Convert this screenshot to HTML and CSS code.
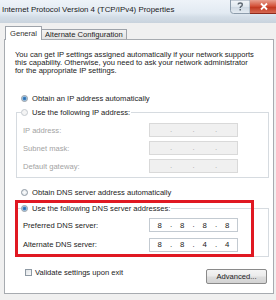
FILE: index.html
```html
<!DOCTYPE html>
<html>
<head>
<meta charset="utf-8">
<link rel="stylesheet" href="styles.css">
</head>
<body>
<div class="window">
  <div class="titlebar">
    <span class="title">Internet Protocol Version 4 (TCP/IPv4) Properties</span>
    <svg class="controls" width="46" height="14" viewBox="0 0 46 14">
      <defs>
        <linearGradient id="hg" x1="0" y1="0" x2="0" y2="1">
          <stop offset="0" stop-color="#f4f7fa"/>
          <stop offset="0.5" stop-color="#dfe7ee"/>
          <stop offset="0.55" stop-color="#cfd9e3"/>
          <stop offset="1" stop-color="#e6edf3"/>
        </linearGradient>
        <linearGradient id="cg" x1="0" y1="0" x2="0" y2="1">
          <stop offset="0" stop-color="#e8a090"/>
          <stop offset="0.45" stop-color="#d4533b"/>
          <stop offset="0.55" stop-color="#c23a22"/>
          <stop offset="1" stop-color="#d86e58"/>
        </linearGradient>
      </defs>
      <path d="M0.5 0 V10.5 Q0.5 13.5 3.5 13.5 H20 V0 Z" fill="url(#hg)" stroke="#8d9cab"/>
      <rect x="20" y="0" width="26" height="13.5" fill="url(#cg)"/>
      <path d="M20 13.5 H46" stroke="#8e2a1c"/>
      <path d="M8.2 4.6 Q8.2 3 10.2 3 Q12.3 3 12.3 4.7 Q12.3 5.9 10.9 6.5 Q10.2 6.9 10.2 8" stroke="#5b6670" stroke-width="1.4" fill="none"/>
      <rect x="9.5" y="9" width="1.5" height="1.5" fill="#5b6670"/>
      <path d="M31 3.5 L37 9.5 M37 3.5 L31 9.5" stroke="#fff" stroke-width="1.8"/>
    </svg>
  </div>
  <div class="body">
    <div class="tabs">
      <div class="tab active">General</div>
      <div class="tab">Alternate Configuration</div>
    </div>
    <div class="panel">
      <p class="intro">You can get IP settings assigned automatically if your network supports<br>this capability. Otherwise, you need to ask your network administrator<br>for the appropriate IP settings.</p>

      <div class="option first"><span class="radio on"></span><span>Obtain an IP address automatically</span></div>

      <fieldset class="group ip">
        <legend class="option disabled-legend"><span class="radio off"></span><span>Use the following IP address:</span></legend>
        <div class="field disabled"><span class="label">IP address:</span><div class="ipbox off"><span></span><i>.</i><span></span><i>.</i><span></span><i>.</i><span></span></div></div>
        <div class="field disabled"><span class="label">Subnet mask:</span><div class="ipbox off"><span></span><i>.</i><span></span><i>.</i><span></span><i>.</i><span></span></div></div>
        <div class="field disabled"><span class="label">Default gateway:</span><div class="ipbox off"><span></span><i>.</i><span></span><i>.</i><span></span><i>.</i><span></span></div></div>
      </fieldset>

      <div class="option dns-auto"><span class="radio"></span><span>Obtain DNS server address automatically</span></div>

      <fieldset class="group dns">
        <legend class="option"><span class="radio on"></span><span>Use the following DNS server addresses:</span></legend>
        <div class="field"><span class="label">Preferred DNS server:</span><div class="ipbox"><span>8</span><i>.</i><span>8</span><i>.</i><span>8</span><i>.</i><span>8</span></div></div>
        <div class="field second"><span class="label">Alternate DNS server:</span><div class="ipbox"><span>8</span><i>.</i><span>8</span><i>.</i><span>4</span><i>.</i><span>4</span></div></div>
      </fieldset>

      <div class="bottom">
        <div class="check"><span class="checkbox"></span><span>Validate settings upon exit</span></div>
        <div class="button">Advanced...</div>
      </div>

      <div class="highlight"></div>
    </div>
  </div>
</div>
</body>
</html>
```

FILE: styles.css
```css
* { box-sizing: border-box; }
html, body { margin: 0; padding: 0; }
body {
  width: 276px;
  height: 300px;
  overflow: hidden;
  background: #f0f0f0;
  font-family: "Liberation Sans", Arial, sans-serif;
  font-size: 7.6px;
  color: #222;
}
.window { width: 276px; }

.titlebar {
  height: 23px;
  display: flex;
  align-items: flex-start;
  background: linear-gradient(#eef3f9 0, #e2eaf2 13px, #d3dde7 17px, #c9d3dd 23px);
}
.title {
  flex: 1;
  min-width: 0;
  font-size: 7.9px;
  line-height: 20px;
  padding-left: 2px;
  color: #1b1b1b;
  white-space: nowrap;
}
.controls {
  flex: none;
  display: block;
}

.body { padding: 3px 2px 0 4px; }
.tabs {
  display: flex;
  align-items: flex-end;
  height: 13px;
  margin-left: 1px;
  position: relative;
  z-index: 1;
}
.tab {
  height: 10px;
  line-height: 9px;
  padding: 0 3px;
  border: 1px solid #9ea3aa;
  border-bottom: none;
  border-left: none;
  background: linear-gradient(#f3f3f3, #e3e3e3);
  color: #222;
  white-space: nowrap;
}
.tab.active {
  height: 14px;
  line-height: 13px;
  margin-bottom: -1px;
  padding: 0 4px;
  border-left: 1px solid #9ea3aa;
  background: #fff;
  color: #333;
}

.panel {
  position: relative;
  width: 270px;
  height: 255px;
  border: 1px solid #a7abb0;
  background: #fff;
  padding: 11px 4px 0 10px;
}
.intro {
  margin: 0;
  line-height: 8px;
  white-space: nowrap;
}
.option {
  display: flex;
  align-items: center;
  height: 10px;
  padding-left: 6px;
  white-space: nowrap;
}
.option.first { margin-top: 18px; }
.option.dns-auto { margin-top: 9px; }
.radio {
  width: 7px;
  height: 7px;
  border-radius: 50%;
  border: 1px solid #8e99a3;
  background: radial-gradient(circle, #fdfdfd, #dde3e8);
  margin-right: 4px;
  flex: none;
}
.radio.on {
  background: radial-gradient(circle, #2c6aa8 0, #3f84c4 1.4px, #a9cbe8 2.2px, #eef2f6 2.8px);
}
.radio.off {
  border-color: #c6cbd0;
  background: #f4f4f4;
}

.group {
  margin: 4px 0 0 1px;
  padding: 6px 0 4px 4px;
  border: 1px solid #d6dbe0;
  min-width: 0;
}
.group legend {
  padding: 0 1px 0 0;
}
.group.dns { margin-top: 6px; padding-top: 5px; padding-bottom: 4px; }
.field {
  display: flex;
  align-items: center;
  height: 14px;
  padding-left: 2px;
  padding-right: 30px;
}
.group.ip .field + .field { margin-top: 4px; }
.field.second { margin-top: 5.5px; }
.label { flex: 1; }
.field.disabled .label { color: #a3a3a3; }
.disabled-legend { color: #222; }

.ipbox {
  width: 89px;
  height: 14px;
  border: 1px solid #c3cad1;
  background: #fff;
  display: grid;
  grid-template-columns: 1fr 3px 1fr 3px 1fr 3px 1fr;
  align-items: center;
  text-align: center;
  font-size: 7.8px;
  color: #222;
}
.ipbox i { font-style: normal; line-height: 1; }
.ipbox.off {
  background: #f0f0f0;
  border-color: #d9d9d9;
  color: #a9a9a9;
}

.bottom {
  display: flex;
  align-items: flex-start;
  margin-top: 12px;
  padding-left: 10px;
}
.check {
  display: flex;
  align-items: center;
  height: 10px;
  margin-top: -1px;
}
.checkbox {
  width: 7px;
  height: 7px;
  border: 1px solid #8e99a3;
  background: linear-gradient(135deg, #dfe3e7, #fafafa);
  margin-right: 3px;
}
.button {
  margin-left: auto;
  margin-right: 2px;
  width: 61px;
  height: 15px;
  border: 1px solid #8a8a8a;
  border-radius: 2px;
  background: linear-gradient(#f4f4f4, #ebebeb 48%, #dddddd 52%, #d3d3d3);
  display: flex;
  align-items: center;
  justify-content: center;
  color: #222;
}

.highlight {
  position: absolute;
  left: 10px;
  top: 160px;
  width: 239px;
  height: 57px;
  border: 3px solid #e01822;
  pointer-events: none;
}
```
